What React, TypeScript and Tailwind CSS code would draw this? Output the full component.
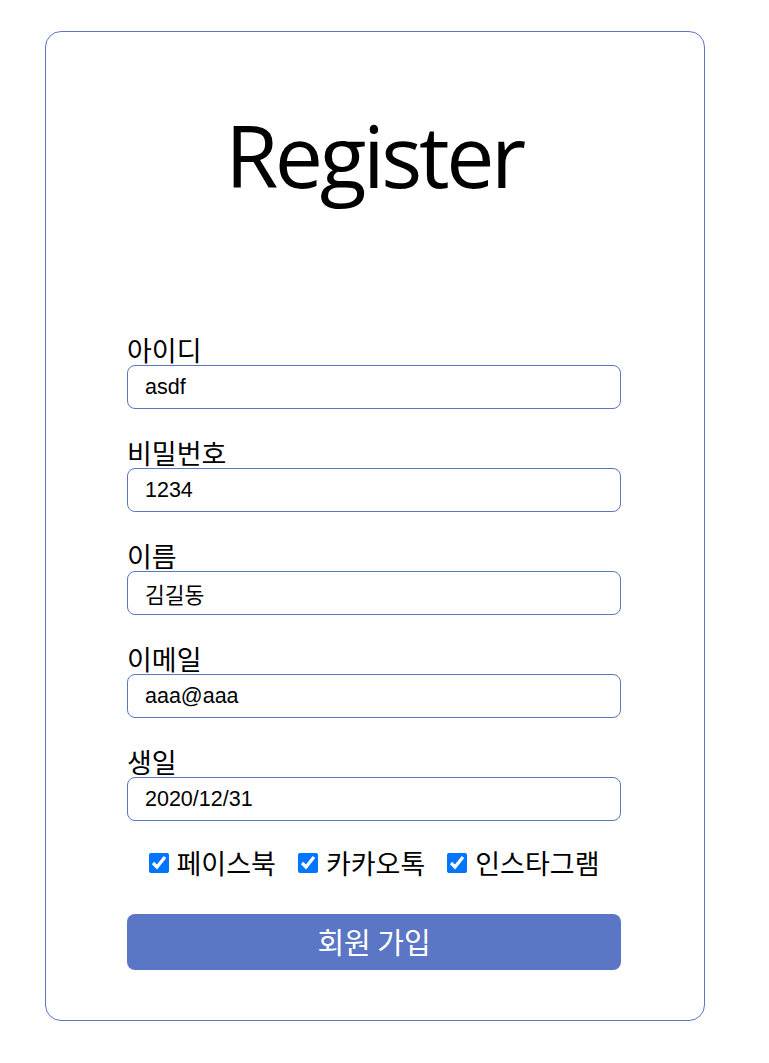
const fields = [
  { label: "아이디", value: "asdf" },
  { label: "비밀번호", value: "1234" },
  { label: "이름", value: "김길동" },
  { label: "이메일", value: "aaa@aaa" },
  { label: "생일", value: "2020/12/31" },
];

const sns = ["페이스북", "카카오톡", "인스타그램"];

export default function App() {
  return (
    <div className="min-h-screen bg-white pl-[45px] pt-[31px] font-['Noto_Sans_CJK_KR',sans-serif] text-black">
      <div className="w-[660px] h-[990px] rounded-[16px] border border-[#5b76c5] pl-[81px] pr-[83px]">
        <h1 className="mt-[80px] text-center font-['Open_Sans','Noto_Sans_CJK_KR',sans-serif] text-[86px] leading-none tracking-[-3.4px]">
          Register
        </h1>
        <form className="mt-[137px] flex flex-col gap-[29px]">
          {fields.map((f) => (
            <label key={f.label} className="flex flex-col">
              <span className="text-[27px] leading-[30px]">{f.label}</span>
              <input
                readOnly
                value={f.value}
                className="h-[44px] w-full rounded-[8px] border border-[#5b76c5] px-[17px] font-['Liberation_Sans','Noto_Sans_CJK_KR',sans-serif] text-[21.5px] outline-none"
              />
            </label>
          ))}
          <div className="-mt-[7px] flex items-center justify-center gap-[22px] text-[27px]">
            {sns.map((s) => (
              <label key={s} className="flex items-center gap-[8px]">
                <input type="checkbox" defaultChecked className="h-5 w-5" />
                <span>{s}</span>
              </label>
            ))}
          </div>
          <button
            type="button"
            className="mt-[1px] h-[56px] w-full rounded-[8px] bg-[#5b76c4] text-[29px] text-white"
          >
            회원 가입
          </button>
        </form>
      </div>
    </div>
  );
}
